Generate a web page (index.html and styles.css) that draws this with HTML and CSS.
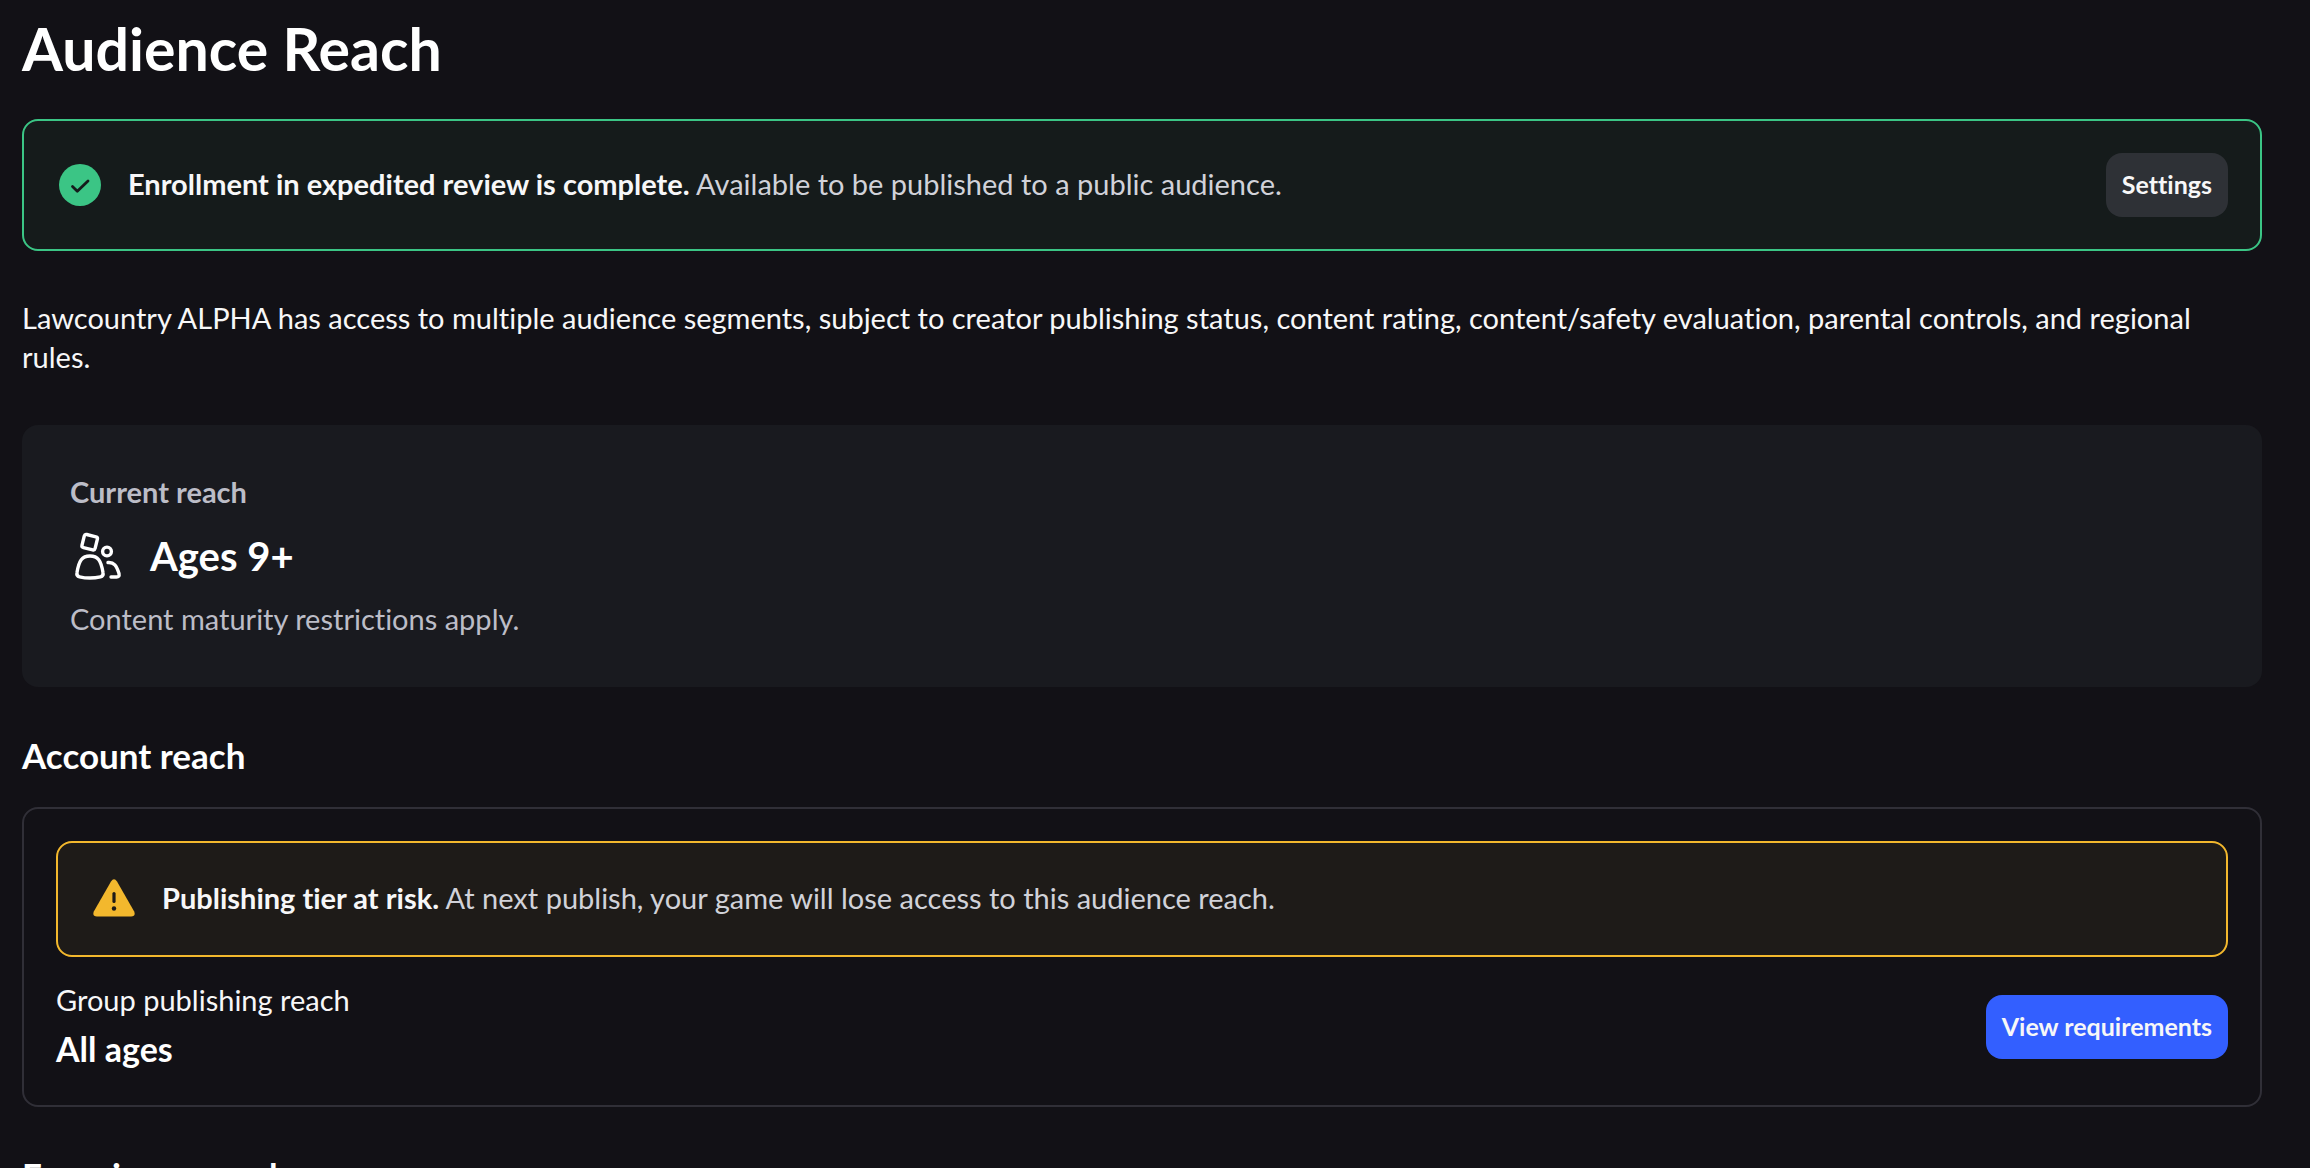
FILE: index.html
```html
<!DOCTYPE html>
<html lang="en">
<head>
<meta charset="utf-8">
<meta name="viewport" content="width=device-width, initial-scale=1">
<title>Audience Reach</title>
<link rel="stylesheet" href="styles.css">
</head>
<body>
<main class="page">
  <h1 class="page-title">Audience Reach</h1>

  <section class="banner banner-success">
    <svg class="banner-icon" viewBox="0 0 42 42" aria-hidden="true">
      <circle cx="21" cy="21" r="21" fill="#3bc585"/>
      <path d="M13.500 22.500l4.800 4.700L29 17" fill="none" stroke="#151b1b" stroke-width="2.800" stroke-linecap="round" stroke-linejoin="round"/>
    </svg>
    <p class="banner-text"><strong>Enrollment in expedited review is complete.</strong> Available to be published to a public audience.</p>
    <button class="button button-neutral" type="button">Settings</button>
  </section>

  <p class="intro">Lawcountry ALPHA has access to multiple audience segments, subject to creator publishing status, content rating, content/safety evaluation, parental controls, and regional rules.</p>

  <section class="current">
    <h2 class="current-label">Current reach</h2>
    <div class="current-value">
      <svg class="people-icon" viewBox="0 0 56 56" fill="none" stroke="#fff" stroke-width="3.400" stroke-linecap="round" stroke-linejoin="round" aria-hidden="true">
        <rect x="13" y="7.500" width="13.500" height="13.500" rx="2" transform="rotate(14 20 14)"/>
        <circle cx="37" cy="23.500" r="4.400"/>
        <path d="M20 28C28 28 31 32.500 33 44.500C33.500 47 32.500 48.300 30.500 48.800C24 50.300 16 50.300 9.500 48.800C7.500 48.300 6.500 47 7 44.500C9 32.500 12 28 20 28Z"/>
        <path d="M38 34.500C44 34 46.500 37.500 49 45.500C49.500 48 48.500 49 46.500 49H41"/>
      </svg>
      <span>Ages 9+</span>
    </div>
    <p class="current-note">Content maturity restrictions apply.</p>
  </section>

  <h2 class="section-title">Account reach</h2>
  <section class="card">
    <div class="banner banner-warning">
      <svg class="banner-icon" viewBox="0 0 42 42" aria-hidden="true">
        <path d="M18 3.500Q21 -1 24 3.500L41.200 33.500Q43 38.500 38 38.500H4Q-1 38.500 .8 33.500Z" fill="#f3b82d"/>
        <path d="M21 15.500v8" stroke="#1e1b18" stroke-width="3.200" stroke-linecap="round"/>
        <circle cx="21" cy="30.500" r="2.200" fill="#1e1b18"/>
      </svg>
      <p class="banner-text"><strong>Publishing tier at risk.</strong> At next publish, your game will lose access to this audience reach.</p>
    </div>
    <div class="card-row">
      <div class="card-info">
        <h3 class="card-label">Group publishing reach</h3>
        <p class="card-value">All ages</p>
      </div>
      <button class="button button-primary" type="button">View requirements</button>
    </div>
  </section>

  <h2 class="section-title">Experience reach</h2>
</main>
</body>
</html>
```
FILE: styles.css
```css
* { box-sizing: border-box; }
html { height: 100%; overflow: hidden; background: #121116; }
body {
  height: 100%;
  margin: 0;
  overflow: hidden;
  background: #121116;
  color: #f7f7f8;
  font-family: Lato, "Open Sans", sans-serif;
  font-size: 29px;
  line-height: 39px;
  font-variant-ligatures: none;
}
h1, h2, h3, p { margin: 0; font-size: inherit; font-weight: 400; }
.page { padding: 15px 48px 0 22px; }
.page-title { color: #fff; font-size: 59px; font-weight: 700; line-height: 68px; margin-bottom: 36px; }

.banner { display: flex; align-items: center; gap: 27px; border: 2px solid; border-radius: 16px; padding: 0 32px 0 35px; }
.banner-success { background: #151b1b; border-color: #3bc585; min-height: 132px; }
.banner-warning { background: #1e1b18; border-color: #f3b82d; min-height: 116px; }
.banner-icon { width: 42px; height: 42px; flex: none; }
.banner-text { flex: 1; padding-bottom: 3px; color: #d1d2d9; }
.banner-text strong { color: #f7f7f8; font-weight: 700; }

.button { flex: none; height: 64px; padding: 0 16px 2px; border: 0; border-radius: 16px; color: #f7f7f8; font: 700 25px/32px Lato, "Open Sans", sans-serif; font-variant-ligatures: none; }
.button-neutral { background: #2e3136; }
.button-primary { background: #335fff; }

.intro { margin: 47px 0 49px; }

.current { padding: 47px 48px 49px; background: #191a1f; border-radius: 16px; }
.current-label { color: #bcbdc7; font-weight: 700; }
.current-value { display: flex; align-items: center; gap: 24px; margin: 17px 0 15px; color: #fff; font-size: 40px; font-weight: 700; line-height: 56px; }
.people-icon { width: 56px; height: 56px; }
.current-note { color: #bcbdc7; }

.section-title { color: #fff; font-size: 35px; font-weight: 700; line-height: 40px; margin: 48px 0 32px; }
.card { border: 2px solid #302f37; border-radius: 16px; padding: 32px; }
.card-row { display: flex; align-items: center; justify-content: space-between; padding-top: 23px; }
.card-info { padding-bottom: 2px; }
.card-value { color: #fff; font-size: 34px; font-weight: 700; line-height: 44px; margin-top: 8px; }
```
